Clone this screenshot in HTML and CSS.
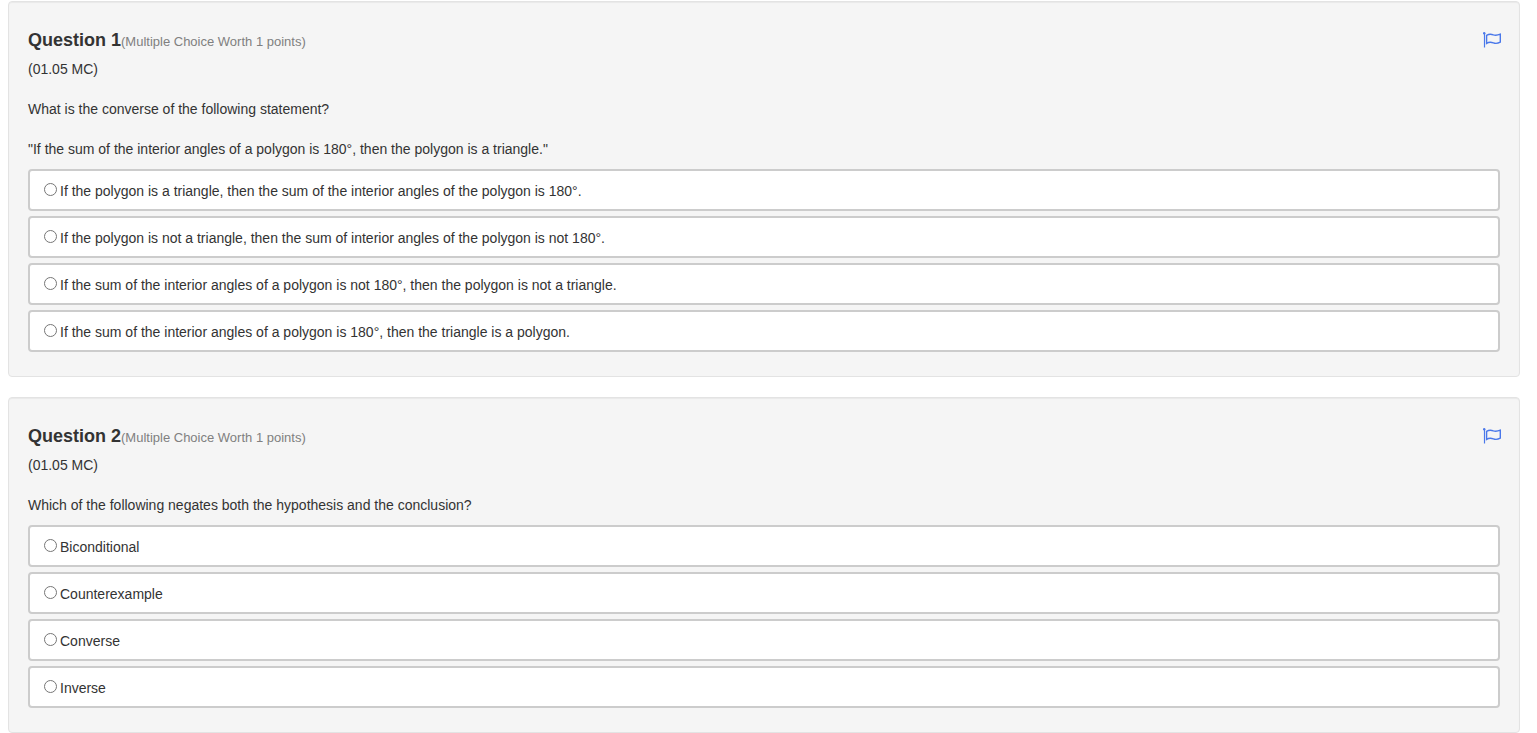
FILE: index.html
```html
<!DOCTYPE html>
<html lang="en">
<head>
    <meta charset="UTF-8">
    <meta name="viewport" content="width=device-width, initial-scale=1.0">
    <title>Questions</title>
    <link rel="stylesheet" href="styles.css">
</head>
<body>
    <form>
        <section class="question">
            <div class="question-header">
                <h3>Question 1</h3>
                <span class="worth">(Multiple Choice Worth 1 points)</span>
                <button type="button" class="flag" aria-label="Flag question 1">
                    <svg width="20" height="16" viewBox="0 0 20 16" fill="none" stroke="#4a78ea">
                        <path d="M2.5 1V15.5" stroke-width="1.2"/>
                        <circle cx="2.2" cy="1.3" r="1.2" fill="#4a78ea" stroke="none"/>
                        <path d="M4.6 3.4C6.8 2 9 1.9 11.4 2.9C13.8 3.8 15.8 3.3 18.3 2.2V10.2C15.8 11.5 13.8 11.8 11.4 10.9C9 10 6.8 10 4.6 11.4Z" stroke-width="1.4"/>
                    </svg>
                </button>
            </div>
            <div class="question-text" id="text1">
                <p>(01.05 MC)</p>
                <p>What is the converse of the following statement?</p>
                <p>"If the sum of the interior angles of a polygon is 180°, then the polygon is a triangle."</p>
            </div>
            <div class="answers" role="radiogroup" aria-labelledby="text1">
                <label class="answer"><input type="radio" name="q1" value="a"><span>If the polygon is a triangle, then the sum of the interior angles of the polygon is 180°.</span></label>
                <label class="answer"><input type="radio" name="q1" value="b"><span>If the polygon is not a triangle, then the sum of interior angles of the polygon is not 180°.</span></label>
                <label class="answer"><input type="radio" name="q1" value="c"><span>If the sum of the interior angles of a polygon is not 180°, then the polygon is not a triangle.</span></label>
                <label class="answer"><input type="radio" name="q1" value="d"><span>If the sum of the interior angles of a polygon is 180°, then the triangle is a polygon.</span></label>
            </div>
        </section>

        <section class="question">
            <div class="question-header">
                <h3>Question 2</h3>
                <span class="worth">(Multiple Choice Worth 1 points)</span>
                <button type="button" class="flag" aria-label="Flag question 2">
                    <svg width="20" height="16" viewBox="0 0 20 16" fill="none" stroke="#4a78ea">
                        <path d="M2.5 1V15.5" stroke-width="1.2"/>
                        <circle cx="2.2" cy="1.3" r="1.2" fill="#4a78ea" stroke="none"/>
                        <path d="M4.6 3.4C6.8 2 9 1.9 11.4 2.9C13.8 3.8 15.8 3.3 18.3 2.2V10.2C15.8 11.5 13.8 11.8 11.4 10.9C9 10 6.8 10 4.6 11.4Z" stroke-width="1.4"/>
                    </svg>
                </button>
            </div>
            <div class="question-text" id="text2">
                <p>(01.05 MC)</p>
                <p>Which of the following negates both the hypothesis and the conclusion?</p>
            </div>
            <div class="answers" role="radiogroup" aria-labelledby="text2">
                <label class="answer"><input type="radio" name="q2" value="a"><span>Biconditional</span></label>
                <label class="answer"><input type="radio" name="q2" value="b"><span>Counterexample</span></label>
                <label class="answer"><input type="radio" name="q2" value="c"><span>Converse</span></label>
                <label class="answer"><input type="radio" name="q2" value="d"><span>Inverse</span></label>
            </div>
        </section>
    </form>
</body>
</html>
```

FILE: styles.css
```css
* {
    box-sizing: border-box;
}
body {
    margin: 0;
    padding: 1px 17px 0 8px;
    background-color: #fff;
    color: #333;
    font-family: "Liberation Sans", Arial, sans-serif;
    font-size: 14px;
    line-height: 20px;
}
.question {
    padding: 19px;
    background-color: #f5f5f5;
    border: 1px solid #e3e3e3;
    border-radius: 4px;
    box-shadow: inset 0 1px 1px rgba(0, 0, 0, 0.05);
}
.question + .question {
    margin-top: 20px;
}
.question-header {
    display: flex;
    align-items: baseline;
    padding-top: 2px;
    line-height: 34px;
}
h3 {
    margin: 0;
    font-size: 18px;
}
.worth {
    color: #808080;
    font-size: 13px;
}
.flag {
    align-self: flex-start;
    display: flex;
    margin-left: auto;
    margin-right: -2px;
    padding: 9px 0 0;
    background: none;
    border: none;
    cursor: pointer;
}
.question-text p {
    margin: 0 0 20px;
}
.question-text p:last-child {
    margin-bottom: 10px;
}
.answer {
    display: flex;
    align-items: flex-start;
    margin-bottom: 5px;
    padding: 10px 14px 8px;
    background-color: #fff;
    border: 2px solid #ccc;
    border-radius: 4px;
    cursor: pointer;
}
.answer input {
    flex: none;
    width: 13px;
    height: 13px;
    margin: 2px 3px 0 0;
}
```
